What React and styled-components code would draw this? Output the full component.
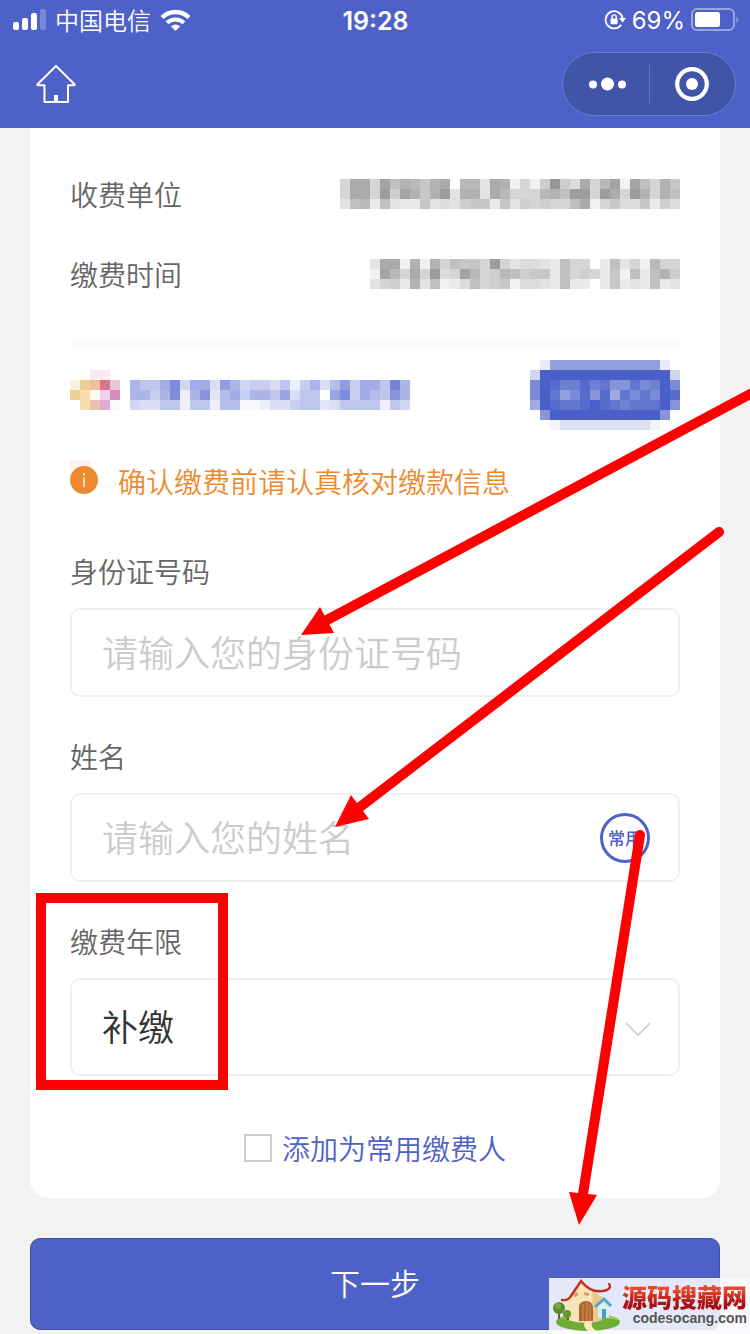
import React, { useState } from 'react';
import styled, { createGlobalStyle, ThemeProvider } from 'styled-components';

const theme = {
  colors: {
    primary: '#4d61c9',
    primaryDark: '#4054a8',
    page: '#f2f2f2',
    border: '#f0f0f0',
    label: '#666666',
    text: '#333333',
    hint: '#cccccc',
    warning: '#ee8a2e',
    mark: '#fe0000',
  },
  fonts: {
    body: '"Noto Sans CJK SC", sans-serif',
    latin: 'Inter, "Noto Sans CJK SC", sans-serif',
  },
};

const GlobalStyle = createGlobalStyle`
  * {
    box-sizing: border-box;
  }
  body {
    margin: 0;
    background: #f2f2f2;
  }
  button, input, select {
    font-family: inherit;
  }
`;

const Page = styled.div`
  position: relative;
  min-height: 100vh;
  overflow: hidden;
  background: ${({ theme }) => theme.colors.page};
  font-family: ${({ theme }) => theme.fonts.body};
  font-weight: 350;
`;

const Header = styled.header`
  background: ${({ theme }) => theme.colors.primary};
  color: #ffffff;
`;

const StatusBar = styled.div`
  display: grid;
  grid-template-columns: 1fr auto 1fr;
  align-items: center;
  height: 40px;
  padding: 0 11px 0 12px;
  font-size: 24px;
  line-height: 40px;
`;

const StatusGroup = styled.div`
  display: flex;
  align-items: center;
  justify-content: ${({ $end }) => ($end ? 'flex-end' : 'flex-start')};
  gap: ${({ $end }) => ($end ? '6px' : '9px')};
  font-family: ${({ theme, $end }) =>
    $end ? theme.fonts.latin : theme.fonts.body};
`;

const Clock = styled.time`
  padding-top: 2px;
  font-family: ${({ theme }) => theme.fonts.latin};
  font-size: 25px;
  font-weight: 600;
  line-height: 38px;
`;

const BatteryLevel = styled.span`
  padding-top: 2px;
  font-weight: 400;
  line-height: 38px;
`;

const NavBar = styled.nav`
  display: flex;
  align-items: center;
  justify-content: space-between;
  height: 88px;
  padding: 0 14px 0 36px;
`;

const IconButton = styled.button`
  display: flex;
  flex: ${({ $grow }) => ($grow ? 1 : 'none')};
  align-items: center;
  justify-content: center;
  padding: 0;
  border: 0;
  background: none;
`;

const Capsule = styled.div`
  display: flex;
  align-items: center;
  width: 174px;
  height: 64px;
  border: 1px solid #6c7cd0;
  border-radius: 32px;
  background: ${({ theme }) => theme.colors.primaryDark};
`;

const CapsuleLine = styled.span`
  width: 1px;
  height: 38px;
  background: #6676c4;
`;

const Card = styled.main`
  margin: 0 30px;
  padding: 26px 40px 28px;
  border-radius: 0 0 18px 18px;
  background: #ffffff;
`;

const InfoRow = styled.div`
  display: flex;
  align-items: center;
  justify-content: space-between;
  height: 80px;
  color: ${({ theme }) => theme.colors.label};
  font-size: 28px;
`;

const Divider = styled.hr`
  height: 6px;
  margin: 27px 0 13px;
  border: 0;
  background: #fafafa;
`;

const BrandRow = styled.div`
  display: flex;
  align-items: center;
  justify-content: space-between;
`;

const Brand = styled.div`
  display: flex;
  align-items: flex-end;
  gap: 10px;
  padding-bottom: 10px;
`;

const PlainButton = styled.button`
  padding: 0;
  border: 0;
  background: none;
  line-height: 0;
`;

const Notice = styled.p`
  display: flex;
  align-items: center;
  gap: 20px;
  height: 42px;
  margin: 30px 0 48px;
  color: ${({ theme }) => theme.colors.warning};
  font-size: 28px;
`;

const Field = styled.div`
  display: flex;
  flex-direction: column;
  gap: 16px;
  margin-bottom: 38px;
`;

const FieldLabel = styled.label`
  color: ${({ theme }) => theme.colors.label};
  font-size: 28px;
  line-height: 42px;
`;

const FieldBox = styled.div`
  display: flex;
  align-items: center;
  height: ${({ $tall }) => ($tall ? '98px' : '89px')};
  padding: 0 28px 0 30px;
  border: 2px solid ${({ theme }) => theme.colors.border};
  border-radius: 10px;
`;

const TextInput = styled.input`
  flex: 1;
  min-width: 0;
  height: 100%;
  padding: 0 0 4px;
  border: 0;
  outline: 0;
  background: none;
  color: ${({ theme }) => theme.colors.text};
  font-size: 36px;
  font-weight: 350;

  &::placeholder {
    color: ${({ theme }) => theme.colors.hint};
  }
`;

const Select = styled.select`
  flex: 1;
  height: 100%;
  padding: 0 0 4px;
  appearance: none;
  border: 0;
  outline: 0;
  background: none;
  color: ${({ theme }) => theme.colors.text};
  font-size: 36px;
  font-weight: 350;
`;

const FrequentButton = styled.button`
  width: 50px;
  height: 50px;
  padding: 0;
  border: 3px solid ${({ theme }) => theme.colors.primary};
  border-radius: 50%;
  background: #ffffff;
  color: ${({ theme }) => theme.colors.primary};
  font-size: 17px;
  font-weight: 500;
`;

const CheckRow = styled.label`
  display: flex;
  align-items: center;
  justify-content: center;
  gap: 10px;
  height: 44px;
  margin-top: 50px;
  color: ${({ theme }) => theme.colors.primary};
  font-size: 28px;
`;

const Checkbox = styled.input`
  width: 28px;
  height: 28px;
  margin: 0;
  appearance: none;
  border: 2px solid ${({ theme }) => theme.colors.hint};
  background: #ffffff;

  &:checked {
    background: ${({ theme }) => theme.colors.primary};
  }
`;

const Footer = styled.footer`
  padding: 40px 30px 4px;
`;

const SubmitButton = styled.button`
  width: 100%;
  height: 92px;
  padding: 0 0 4px;
  border: 1px solid #40529f;
  border-radius: 10px;
  background: ${({ theme }) => theme.colors.primary};
  color: #ffffff;
  font-size: 30px;
  font-weight: 350;
`;

// red marks lie over the form
const Annotations = styled.svg`
  position: absolute;
  top: 0;
  left: 0;
  pointer-events: none;
`;

const Watermark = styled.aside`
  position: absolute;
  right: 0;
  bottom: 0;
  display: flex;
  justify-content: space-between;
  width: 201px;
  height: 56px;
  padding-right: 3px;
  background: rgba(250, 251, 255, 0.88);
`;

const WatermarkText = styled.div`
  display: flex;
  flex-direction: column;
  align-items: flex-end;
  padding-top: 4px;
`;

const WatermarkName = styled.strong`
  background: linear-gradient(#e8482c 30%, #a80f12 80%);
  background-clip: text;
  color: transparent;
  font-size: 25px;
  font-weight: 900;
  line-height: 28px;
`;

const WatermarkUrl = styled.span`
  color: #555555;
  font-family: 'Liberation Sans', sans-serif;
  font-size: 14px;
  font-weight: 700;
  line-height: 16px;
`;

const CELL = 10;

// one hex digit per cell, 0 is the full colour and f is white
const payeeCells = [
  '93392645743f55b34d9d808a3952d26947',
  '93391824741b44b3599954611913914946',
  'b65c6bcc7bab877c7b8989963d97aa7c8a',
];
const timeCells = [
  'b33d4d49677919baabc699fc6b9d599',
  'd259391a9259856877c6989c7d6c648',
  'b98c4b6dca6987daabc6ccfc7cbc6cb',
];
const brandCells = [
  '68851a55b36a99b8d96b73955806',
  '66961d62c7596684b88f41957826',
  'abb88d88d77eedbb988cb8888d8a',
];
const actionCells = [
  'fd66666666666df',
  'b0000000000000b',
  '401331325524304',
  '402641517242401',
  '701221012322205',
  'f5000000000005f',
  'ffeccccccccceff',
];
const logoCells = [
  [null, null, '#f8ebf3', '#f8ebf3', null],
  ['#fbf1e2', '#efcc94', '#edc09a', '#d5788a', '#eac6dd'],
  ['#efcf96', '#f6dcae', '#fdf8f4', '#efd3ec', '#d68fbd'],
  [null, '#f7dcae', '#edbfb0', '#e2aad0', '#fdf8fb'],
];

function Mosaic({ cells, color, label }) {
  return (
    <svg
      role="img"
      aria-label={label}
      width={cells[0].length * CELL}
      height={cells.length * CELL}
      shapeRendering="crispEdges"
    >
      {cells.map((row, y) =>
        [...row].map((cell, x) => (
          <rect
            key={`${x}-${y}`}
            x={x * CELL}
            y={y * CELL}
            width={CELL}
            height={CELL}
            fill={color || cell || 'none'}
            fillOpacity={color ? (15 - parseInt(cell, 16)) / 15 : 1}
          />
        ))
      )}
    </svg>
  );
}

function SignalIcon() {
  return (
    <svg width="34" height="22" viewBox="0 0 34 22" fill="#fff">
      <rect x="1" y="13" width="6" height="8" rx="2" />
      <rect x="10" y="9" width="6" height="12" rx="2" />
      <rect x="19" y="4" width="6" height="17" rx="2" />
      <rect x="28" y="0" width="6" height="21" rx="2" opacity="0.25" />
    </svg>
  );
}

function WifiIcon() {
  return (
    <svg width="31" height="23" viewBox="0 0 31 23" fill="none" stroke="#fff">
      <path d="M2 8.5a19.5 19.5 0 0 1 27 0" strokeWidth="4.4" />
      <path d="M7 13.8a12.5 12.5 0 0 1 17 0" strokeWidth="4" />
      <path d="M15.5 22l-4.600-4.600a6.600 6.600 0 0 1 9.200 0z" fill="#fff" stroke="none" />
    </svg>
  );
}

function RotationLockIcon() {
  return (
    <svg width="22" height="22" viewBox="0 0 22 22" fill="none" stroke="#fff">
      <path d="M17.2 15.8A8.6 8.6 0 1 1 18.6 9" strokeWidth="1.8" />
      <path d="M15 9h7l-3.5 4.6z" fill="#fff" stroke="none" />
      <rect x="6.6" y="9.6" width="7" height="5.6" rx="1" fill="#fff" stroke="none" />
      <path d="M8 10V8a2.1 2.1 0 0 1 4.2 0v2" strokeWidth="1.4" />
    </svg>
  );
}

function BatteryIcon() {
  return (
    <svg width="48" height="24" viewBox="0 0 48 24">
      <rect x="1" y="1" width="42" height="21" rx="5" fill="none" stroke="#98a4e0" strokeWidth="2" />
      <rect x="4" y="4" width="25" height="15" rx="2.5" fill="#fff" />
      <path d="M45.5 8.5a4 4 0 0 1 0 6.5z" fill="#98a4e0" />
    </svg>
  );
}

function HomeIcon() {
  return (
    <svg
      width="40"
      height="40"
      viewBox="0 0 40 40"
      fill="none"
      stroke="#fff"
      strokeWidth="2"
      strokeLinejoin="round"
    >
      <path d="M20 2L1.5 20.2V21.2H8.5V38H32V21.2H38.5V20.2Z" />
      <path d="M20 31v7" strokeWidth="4" />
    </svg>
  );
}

function MoreIcon() {
  return (
    <svg width="40" height="16" viewBox="0 0 40 16" fill="#fff">
      <circle cx="7" cy="8.5" r="4" />
      <circle cx="21.5" cy="8" r="6.5" />
      <circle cx="36" cy="8.5" r="4" />
    </svg>
  );
}

function CloseIcon() {
  return (
    <svg width="34" height="34" viewBox="0 0 34 34">
      <circle cx="17" cy="17" r="14.8" fill="none" stroke="#fff" strokeWidth="4.2" />
      <circle cx="17" cy="17" r="6" fill="#fff" />
    </svg>
  );
}

function NoticeIcon() {
  return (
    <svg width="28" height="42" viewBox="0 0 28 42">
      <rect width="20" height="10" fill="#fcf1ed" />
      <circle cx="14" cy="20" r="14" fill="#ee8a2e" />
      <path d="M14 17.5V27" stroke="#fff" strokeWidth="1.4" />
      <circle cx="14" cy="14.2" r="1.1" fill="#fff" />
    </svg>
  );
}

function ChevronIcon() {
  return (
    <svg width="26" height="20" viewBox="0 0 26 20" fill="none" stroke="#ccc" strokeWidth="1.6">
      <path d="M2 6l12 12L26 6" />
    </svg>
  );
}

function HouseLogo() {
  return (
    <svg width="72" height="56" viewBox="0 0 72 56">
      <ellipse cx="39" cy="44" rx="32" ry="9" fill="#6fae35" />
      <path d="M10 41c8-7 50-8 60 1-12-3-45-4-60-1z" fill="#a6cf4b" />
      <path d="M16 21L32 5l22 15-1 22c-10 4-26 3-34 0z" fill="#f7e3b4" />
      <path d="M43 12l11 8-1 22-9 2z" fill="#ecc98a" />
      <path
        d="M13 22q6 1 9-4L32 3q11 14 26 9 5-3 2-6"
        fill="none"
        stroke="#bf2c22"
        strokeWidth="2.4"
        strokeLinecap="round"
      />
      <path d="M25 15l4-1v4l-4 1zM35 14l5 1v3l-5-1z" fill="#dba164" />
      <path d="M30 43V30q0-7 7-7t7 8v12z" fill="#ad6430" />
      <path d="M34 43V26M38 43V24M41 43V27" stroke="#d8964e" strokeWidth="1" />
      <path d="M49 28l6-6 5 6v12H49z" fill="#d8eef3" />
      <path d="M46 29l9-8 7 7" fill="none" stroke="#52a7c8" strokeWidth="3" />
      <path d="M53 31h4v9h-4z" fill="#4da0bf" />
      <path d="M36 44q-3 4 3 9h9q-7-3-5-9z" fill="#f8edb9" />
      <path d="M10 33v8M19 37v5" stroke="#805624" strokeWidth="2" />
      <circle cx="10" cy="30" r="6" fill="#578b2d" />
      <circle cx="9" cy="28" r="3" fill="#78ac3d" />
      <circle cx="18" cy="36" r="4" fill="#62982f" />
    </svg>
  );
}

export default function App() {
  const [idNumber, setIdNumber] = useState('');
  const [name, setName] = useState('');
  const [saved, setSaved] = useState(false);

  return (
    <ThemeProvider theme={theme}>
      <GlobalStyle />
      <Page>
        <Header>
          <StatusBar>
            <StatusGroup>
              <SignalIcon />
              <span>中国电信</span>
              <WifiIcon />
            </StatusGroup>
            <Clock>19:28</Clock>
            <StatusGroup $end>
              <RotationLockIcon />
              <BatteryLevel>69%</BatteryLevel>
              <BatteryIcon />
            </StatusGroup>
          </StatusBar>
          <NavBar>
            <IconButton aria-label="首页">
              <HomeIcon />
            </IconButton>
            <Capsule>
              <IconButton $grow aria-label="更多">
                <MoreIcon />
              </IconButton>
              <CapsuleLine />
              <IconButton $grow aria-label="关闭">
                <CloseIcon />
              </IconButton>
            </Capsule>
          </NavBar>
        </Header>

        <Card>
          <InfoRow>
            <span>收费单位</span>
            <Mosaic cells={payeeCells} color="#969696" label="收费单位" />
          </InfoRow>
          <InfoRow>
            <span>缴费时间</span>
            <Mosaic cells={timeCells} color="#969696" label="缴费时间" />
          </InfoRow>
          <Divider />
          <BrandRow>
            <Brand>
              <Mosaic cells={logoCells} label="标志" />
              <Mosaic cells={brandCells} color="#7484d8" label="名称" />
            </Brand>
            <PlainButton>
              <Mosaic cells={actionCells} color="#4a60c8" label="操作" />
            </PlainButton>
          </BrandRow>
          <Notice>
            <NoticeIcon />
            确认缴费前请认真核对缴款信息
          </Notice>

          <Field>
            <FieldLabel htmlFor="idNumber">身份证号码</FieldLabel>
            <FieldBox>
              <TextInput
                id="idNumber"
                placeholder="请输入您的身份证号码"
                value={idNumber}
                onChange={(e) => setIdNumber(e.target.value)}
              />
            </FieldBox>
          </Field>
          <Field>
            <FieldLabel htmlFor="name">姓名</FieldLabel>
            <FieldBox>
              <TextInput
                id="name"
                placeholder="请输入您的姓名"
                value={name}
                onChange={(e) => setName(e.target.value)}
              />
              <FrequentButton>常用</FrequentButton>
            </FieldBox>
          </Field>
          <Field>
            <FieldLabel htmlFor="years">缴费年限</FieldLabel>
            <FieldBox $tall>
              <Select id="years">
                <option>补缴</option>
              </Select>
              <ChevronIcon />
            </FieldBox>
          </Field>

          <CheckRow>
            <Checkbox
              type="checkbox"
              checked={saved}
              onChange={(e) => setSaved(e.target.checked)}
            />
            添加为常用缴费人
          </CheckRow>
        </Card>

        <Footer>
          <SubmitButton>下一步</SubmitButton>
        </Footer>

        <Annotations width="750" height="1334" fill="none" stroke={theme.colors.mark}>
          <rect x="41" y="898" width="182" height="187" strokeWidth="10" />
          <g strokeWidth="10" strokeLinecap="round">
            <path d="M756 391L327 620" />
            <path d="M719 532L360 807" />
            <path d="M640 835L583 1194" />
          </g>
          <g fill={theme.colors.mark} stroke="none">
            <path d="M301 635L320 607L334 633Z" />
            <path d="M335 827L351 795L369 819Z" />
            <path d="M579 1225L569 1192L597 1195Z" />
          </g>
        </Annotations>
        <Watermark>
          <HouseLogo />
          <WatermarkText>
            <WatermarkName>源码搜藏网</WatermarkName>
            <WatermarkUrl>codesocang.com</WatermarkUrl>
          </WatermarkText>
        </Watermark>
      </Page>
    </ThemeProvider>
  );
}
